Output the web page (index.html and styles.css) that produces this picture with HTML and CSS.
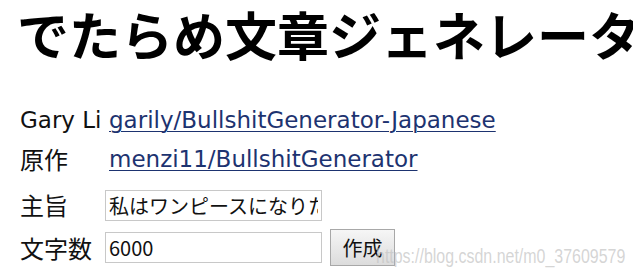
FILE: index.html
```html
<!DOCTYPE html>
<html lang="ja">
<head>
<meta charset="utf-8">
<title>でたらめ文章ジェネレーター</title>
<link rel="stylesheet" href="styles.css">
</head>
<body>
<h1 class="title">でたらめ文章ジェネレーター</h1>
<div class="form">
  <span class="label">Gary Li</span>
  <a class="link" href="#">garily/BullshitGenerator-Japanese</a>
  <span class="label cjk">原作</span>
  <a class="link" href="#">menzi11/BullshitGenerator</a>
  <span class="label cjk row3">主旨</span>
  <div class="field row3"><input class="text" type="text" value="私はワンピースになりたい"></div>
  <span class="label cjk">文字数</span>
  <div class="field"><input class="text" type="text" value="6000"><button class="btn" type="button">作成</button></div>
</div>
<div class="watermark">https://blog.csdn.net/m0_37609579</div>
</body>
</html>
```
FILE: styles.css
```css
html, body {
  margin: 0;
  padding: 0;
  background: #fff;
  overflow: hidden;
}
body {
  width: 633px;
  height: 277px;
  position: relative;
  font-family: "DejaVu Sans", "Noto Sans CJK JP", sans-serif;
  color: #111;
}
.title {
  margin: 0;
  padding: 4px 0 0 17px;
  font-family: "Noto Sans CJK JP", sans-serif;
  font-weight: 700;
  font-size: 52px;
  line-height: 60px;
  white-space: nowrap;
  color: #000;
}
.form {
  display: grid;
  grid-template-columns: 85px auto;
  grid-template-rows: 39px 39px 48px 43px;
  align-items: center;
  padding: 36px 0 0 20px;
  font-size: 23px;
}
.label {
  white-space: nowrap;
  line-height: 30px;
}
.cjk {
  font-family: "Noto Sans CJK JP", sans-serif;
  font-size: 24px;
}
.row3 {
  margin-top: 6px;
}
.link {
  color: #1d3370;
  text-decoration: underline;
  text-decoration-thickness: 1px;
  text-underline-offset: 3px;
  padding-left: 4px;
  white-space: nowrap;
  line-height: 30px;
}
.field {
  display: flex;
  align-items: center;
  gap: 8px;
}
.text {
  box-sizing: border-box;
  width: 217px;
  height: 31px;
  margin: 0;
  border: 1px solid #c8c8c8;
  padding: 0 3px;
  font-family: "Noto Sans CJK JP", sans-serif;
  font-size: 20px;
  color: #111;
  background: #fff;
}
.btn {
  box-sizing: border-box;
  width: 65px;
  height: 37px;
  margin: 0;
  border: 1px solid #a8a8a8;
  background: linear-gradient(#f6f6f6, #dcdcdc);
  font-family: "Noto Sans CJK JP", sans-serif;
  font-size: 20px;
  color: #111;
  padding: 0;
}
.watermark {
  position: absolute;
  left: 376px;
  top: 244px;
  font-family: "Liberation Sans", sans-serif;
  font-size: 21px;
  color: rgba(195, 195, 195, 0.7);
  white-space: nowrap;
  transform: scaleX(0.76);
  transform-origin: left top;
}
```
